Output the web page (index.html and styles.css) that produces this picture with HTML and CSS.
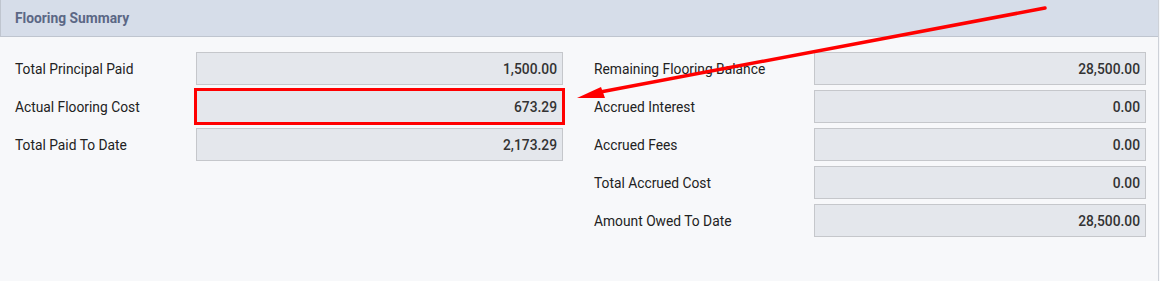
FILE: index.html
```html
<!DOCTYPE html>
<html>
<head>
<meta charset="utf-8">
<link rel="stylesheet" href="styles.css">
</head>
<body>
<div class="panel">
  <div class="panel-header">Flooring Summary</div>
  <div class="panel-body">
    <div class="col col-left">
      <div class="row"><div class="label">Total Principal Paid</div><div class="field">1,500.00</div></div>
      <div class="row"><div class="label">Actual Flooring Cost</div><div class="field highlighted">673.29</div></div>
      <div class="row"><div class="label">Total Paid To Date</div><div class="field">2,173.29</div></div>
    </div>
    <div class="col col-right">
      <div class="row"><div class="label">Remaining Flooring Balance</div><div class="field">28,500.00</div></div>
      <div class="row"><div class="label">Accrued Interest</div><div class="field">0.00</div></div>
      <div class="row"><div class="label">Accrued Fees</div><div class="field">0.00</div></div>
      <div class="row"><div class="label">Total Accrued Cost</div><div class="field">0.00</div></div>
      <div class="row"><div class="label">Amount Owed To Date</div><div class="field">28,500.00</div></div>
    </div>
  </div>
</div>
<svg class="annotation" width="1160" height="281" viewBox="0 0 1160 281">
  <line x1="1045" y1="8" x2="595" y2="93" stroke="#ff0000" stroke-width="3.5" stroke-linecap="round"/>
  <polygon points="577,98 601,87 605,98" fill="#ff0000"/>
</svg>
</body>
</html>
```
FILE: styles.css
```css
html, body {
  margin: 0;
  padding: 0;
}
body {
  width: 1160px;
  height: 281px;
  background: #f7f8fa;
  font-family: Roboto, "Liberation Sans", Arial, sans-serif;
  font-size: 13.8px;
  color: #222;
  position: relative;
  overflow: hidden;
}
.panel {
  width: 1159px;
  height: 281px;
  box-sizing: border-box;
  border-right: 1px solid #cdd1d8;
}
.panel-header {
  height: 37px;
  box-sizing: border-box;
  background: #d6dde9;
  border-left: 1px solid #bfc5cf;
  border-bottom: 1px solid #bfc5cf;
  padding-left: 14px;
  display: flex;
  align-items: center;
  font-weight: 700;
  color: #5b6785;
  padding-bottom: 1px;
}
.panel-body {
  display: flex;
  padding: 15px 12px 0 15px;
  gap: 31px;
}
.col {
  display: flex;
  flex-direction: column;
  gap: 5px;
}
.col-left {
  width: 548px;
}
.col-right {
  width: 552px;
}
.row {
  display: flex;
  align-items: center;
  height: 33px;
}
.col-left .label {
  width: 181px;
}
.col-right .label {
  width: 220px;
}
.label {
  flex: none;
  padding-top: 1px;
}
.field {
  flex: 1;
  height: 33px;
  box-sizing: border-box;
  background: #e4e7ec;
  border: 1px solid #c5c7cb;
  display: flex;
  align-items: center;
  justify-content: flex-end;
  padding-right: 5px;
  font-weight: 500;
  color: #333;
}
.highlighted {
  outline: 3px solid #ff0000;
  outline-offset: -1px;
}
.annotation {
  position: absolute;
  left: 0;
  top: 0;
  pointer-events: none;
}
```
